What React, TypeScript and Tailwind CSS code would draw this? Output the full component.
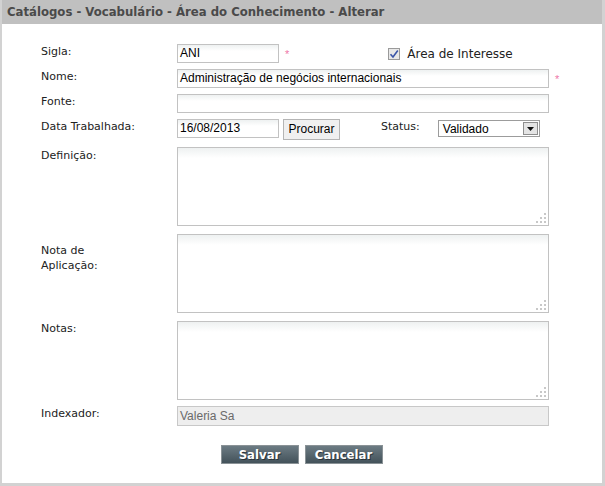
import type { ReactNode } from 'react'

const label = "text-[11px] text-[#222] font-['DejaVu_Sans',sans-serif] leading-[14px]"
const field =
  "h-[19px] border border-[#c2c2c2] bg-[linear-gradient(#eef1f1,#ffffff_6px)] px-[2px] text-[12px] leading-[17px] text-black font-['Liberation_Sans',Arial,sans-serif]"

function Star() {
  return <span className="block text-[11px] leading-[11px] text-[#ee77a8] font-['Liberation_Sans',sans-serif]">*</span>
}

function Row({ name, children, className = '', pad = 'pt-[1px]' }: { name: ReactNode; children: ReactNode; className?: string; pad?: string }) {
  return (
    <div className={`flex items-start ${className}`}>
      <div className={`w-[175px] shrink-0 pl-[39px] ${pad} ${label}`}>{name}</div>
      <div className="flex items-start">{children}</div>
    </div>
  )
}

function Area() {
  return (
    <div className="relative h-[79px] w-[372px] border border-[#c2c2c2] bg-[linear-gradient(#eef1f1,#ffffff_10px)]">
      <svg width="11" height="11" viewBox="0 0 11 11" className="absolute right-[1px] bottom-[1px]">
        <g fill="#c8c8c8">
          <rect x="8" y="0" width="2" height="2" />
          <rect x="4" y="4" width="2" height="2" />
          <rect x="8" y="4" width="2" height="2" />
          <rect x="0" y="8" width="2" height="2" />
          <rect x="4" y="8" width="2" height="2" />
          <rect x="8" y="8" width="2" height="2" />
        </g>
      </svg>
    </div>
  )
}

export default function App() {
  return (
    <div className="w-[605px] h-[486px] bg-white border-l-2 border-r-[3px] border-b-[3px] border-[#d2d2d2] flex flex-col">
      <div className="h-[24px] bg-[#c0c0c0] pl-[5px] flex items-center text-[13px] font-bold text-[#4a4a4a] font-['DejaVu_Sans_Condensed',sans-serif]">
        Catálogos - Vocabulário - Área do Conhecimento - Alterar
      </div>

      <div className="flex flex-col">
        <Row name="Sigla:" className="mt-[20px]">
          <div className={`${field} w-[102px]`}>ANI</div>
          <div className="ml-[6px] mt-[5px]"><Star /></div>
          <div className="ml-[99px] mt-[3px] flex items-center leading-[14px]">
            <div className="w-[12px] h-[12px] border border-[#9a9a9a] bg-[#e8e8e8] flex items-center justify-center">
              <svg width="10" height="10" viewBox="0 0 10 10">
                <path d="M1.5 5.2 L4 8 L8.8 1.5" fill="none" stroke="#3a55a8" strokeWidth="1.6" />
              </svg>
            </div>
            <span className="ml-[7px] text-[12px] leading-[14px] text-[#222] font-['DejaVu_Sans',sans-serif]">Área de Interesse</span>
          </div>
        </Row>

        <Row name="Nome:" className="mt-[6px]">
          <div className={`${field} w-[372px]`}>Administração de negócios internacionais</div>
          <div className="ml-[6px] mt-[5px]"><Star /></div>
        </Row>

        <Row name="Fonte:" className="mt-[6px]">
          <div className={`${field} w-[372px]`}></div>
        </Row>

        <Row name="Data Trabalhada:" className="mt-[6px]">
          <div className={`${field} w-[102px]`}>16/08/2013</div>
          <button className="ml-[4px] h-[21px] w-[57px] border border-[#b5b5b5] bg-[#f0f0f0] text-[12px] leading-[19px] text-black font-['Liberation_Sans',Arial,sans-serif]">
            Procurar
          </button>
          <span className={`ml-[41px] mt-[1px] ${label}`}>Status:</span>
          <div className="ml-[18px] mt-[1px] w-[102px] h-[17px] border border-[#9c9c9c] bg-white flex items-center justify-between">
            <span className="pl-[4px] text-[12px] leading-none text-black font-['Liberation_Sans',Arial,sans-serif]">Validado</span>
            <div className="w-[15px] h-[13px] mr-[1px] border border-[#8e8e8e] bg-[#e4e4e4] flex items-center justify-center">
              <svg width="7" height="4" viewBox="0 0 7 4"><path d="M0 0 H7 L3.5 4 Z" fill="#111" /></svg>
            </div>
          </div>
        </Row>

        <Row name="Definição:" className="mt-[7px]" pad="pt-[2px]">
          <Area />
        </Row>

        <Row name={<span className="block leading-[15px]">Nota de<br />Aplicação:</span>} className="mt-[8px]" pad="pt-[9px]">
          <Area />
        </Row>

        <Row name="Notas:" className="mt-[8px]">
          <Area />
        </Row>

        <Row name="Indexador:" className="mt-[6px]">
          <div className="h-[20px] w-[372px] border border-[#c8c8c8] bg-[#eeeeee] px-[2px] text-[12px] leading-[18px] text-[#6a6a6a] font-['Liberation_Sans',Arial,sans-serif]">
            Valeria Sa
          </div>
        </Row>

        <div className="mt-[19px] flex justify-center gap-[6px] pr-[1px]">
          {['Salvar', 'Cancelar'].map((t) => (
            <button
              key={t}
              className="h-[19px] w-[78px] border border-[#8a9296] bg-[linear-gradient(#6c7b83,#43525a)] text-[13px] leading-[17px] font-bold text-white font-['DejaVu_Sans_Condensed',sans-serif] [text-shadow:1px_1px_0_#2a343a]"
            >
              {t}
            </button>
          ))}
        </div>
      </div>
    </div>
  )
}
